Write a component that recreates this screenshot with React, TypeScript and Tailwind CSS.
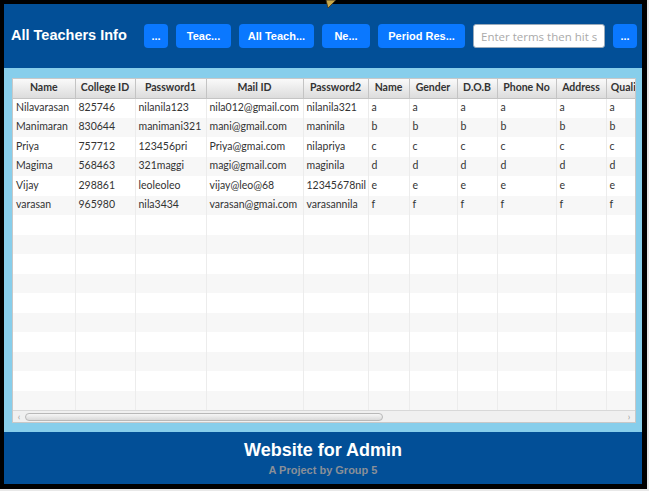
import React from "react";

const cols = [
  { label: "Name", w: 62 },
  { label: "College ID", w: 60 },
  { label: "Password1", w: 71 },
  { label: "Mail ID", w: 97 },
  { label: "Password2", w: 65 },
  { label: "Name", w: 41 },
  { label: "Gender", w: 48 },
  { label: "D.O.B", w: 40 },
  { label: "Phone No", w: 59 },
  { label: "Address", w: 50 },
  { label: "Qualification", w: 70 },
];

const tableWidth = cols.reduce((s, c) => s + c.w, 0);

const rows = [
  ["Nilavarasan", "825746", "nilanila123", "nila012@gmail.com", "nilanila321", "a"],
  ["Manimaran", "830644", "manimani321", "mani@gmail.com", "maninila", "b"],
  ["Priya", "757712", "123456pri", "Priya@gmai.com", "nilapriya", "c"],
  ["Magima", "568463", "321maggi", "magi@gmail.com", "maginila", "d"],
  ["Vijay", "298861", "leoleoleo", "vijay@leo@68", "12345678nil", "e"],
  ["varasan", "965980", "nila3434", "varasan@gmai.com", "varasannila", "f"],
];

const emptyRows = 10;

const TopButton = ({ label, w }: { label: string; w: string }) => (
  <button className={`${w} h-6 rounded-[4px] bg-[#0a78ff] text-white text-[11px] font-bold flex items-center justify-center shrink-0`}>
    {label}
  </button>
);

export default function App() {
  return (
    <div className="w-[649px] h-[491px] bg-[#e8e8e8] relative overflow-hidden" style={{ fontFamily: "Arial, 'Liberation Sans', sans-serif" }}>
      <div className="w-[647px] h-[489px] border-l-4 border-t-4 border-r-[5px] border-b-[5px] border-black flex flex-col">
        {/* top bar */}
        <div className="h-16 bg-[#024f97] flex items-center pl-[7px] shrink-0">
          <div className="text-white font-bold text-[14.5px] w-[133px] shrink-0">All Teachers Info</div>
          <div className="flex items-center gap-2">
            <TopButton label="..." w="w-6" />
            <TopButton label="Teac..." w="w-[55px]" />
            <TopButton label="All Teach..." w="w-[75px]" />
            <TopButton label="Ne..." w="w-12" />
            <TopButton label="Period Res..." w="w-[87px]" />
            <input
              placeholder="Enter terms then hit search"
              className="w-[132px] h-6 rounded-[3px] bg-white border border-[#9ab] px-[7px] text-[11.5px] text-[#333] placeholder:text-[#aaa] outline-none"
              style={{ fontFamily: "'Open Sans', sans-serif" }}
            />
            <TopButton label="..." w="w-6" />
          </div>
        </div>

        {/* table region */}
        <div className="flex-1 bg-[#87ceeb] pl-2 pr-[6px] pt-[10px] pb-[9px] flex">
          <div className="flex-1 bg-white border border-[#c8c8c8] flex flex-col overflow-hidden" style={{ fontFamily: "Lato, 'Open Sans', sans-serif" }}>
            <div className="flex-1 overflow-hidden">
              <table className="table-fixed border-collapse text-[10.5px] text-[#333]" style={{ width: tableWidth }}>
                <colgroup>
                  {cols.map((c, i) => (
                    <col key={i} style={{ width: c.w }} />
                  ))}
                </colgroup>
                <thead>
                  <tr className="h-[19px] bg-gradient-to-b from-[#fafafa] to-[#dcdcdc]">
                    {cols.map((c, i) => (
                      <th key={i} className="font-bold text-[#333] border-r border-b border-[#c4c4c4] whitespace-nowrap overflow-hidden text-center px-[2px]">
                        {c.label}
                      </th>
                    ))}
                  </tr>
                </thead>
                <tbody>
                  {rows.map((r, i) => {
                    const cells = [r[0], r[1], r[2], r[3], r[4], r[5], r[5], r[5], r[5], r[5], r[5]];
                    return (
                      <tr key={i} className={`h-[19.5px] ${i % 2 === 0 ? "bg-white" : "bg-[#f7f7f7]"}`}>
                        {cells.map((v, j) => (
                          <td key={j} className="border-r border-[#ececec] px-[3px] whitespace-nowrap overflow-hidden">
                            {v}
                          </td>
                        ))}
                      </tr>
                    );
                  })}
                  {Array.from({ length: emptyRows }).map((_, i) => (
                    <tr key={"e" + i} className={`h-[19.5px] ${(i + rows.length) % 2 === 0 ? "bg-white" : "bg-[#f7f7f7]"}`}>
                      {cols.map((_, j) => (
                        <td key={j} className="border-r border-[#ececec]" />
                      ))}
                    </tr>
                  ))}
                </tbody>
              </table>
            </div>
            {/* horizontal scrollbar */}
            <div className="h-[12px] shrink-0 bg-[#f0f0f0] border-t border-[#d8d8d8] flex items-center px-[2px] gap-[2px]">
              <span className="text-[9px] text-[#999] leading-none w-2 text-center">‹</span>
              <div className="w-[358px] h-[8px] rounded-full bg-gradient-to-b from-[#f6f6f6] to-[#dadada] border border-[#b8b8b8]" />
              <div className="flex-1" />
              <span className="text-[9px] text-[#999] leading-none w-2 text-center">›</span>
            </div>
          </div>
        </div>

        {/* footer */}
        <div className="h-[52px] bg-[#024f97] flex flex-col items-center justify-center shrink-0">
          <div className="text-white font-bold text-[18px] leading-[22px]">Website for Admin</div>
          <div className="text-[#8a8f98] font-bold text-[11px] leading-[14px] mt-[2px]">A Project by Group 5</div>
        </div>
      </div>

      {/* small pointer at top */}
      <svg className="absolute left-[325px] top-0" width="12" height="9" viewBox="0 0 12 9">
        <polygon points="1,0 11,0 3,8" fill="#c9a94a" stroke="#3a3020" strokeWidth="0.8" />
      </svg>
    </div>
  );
}
